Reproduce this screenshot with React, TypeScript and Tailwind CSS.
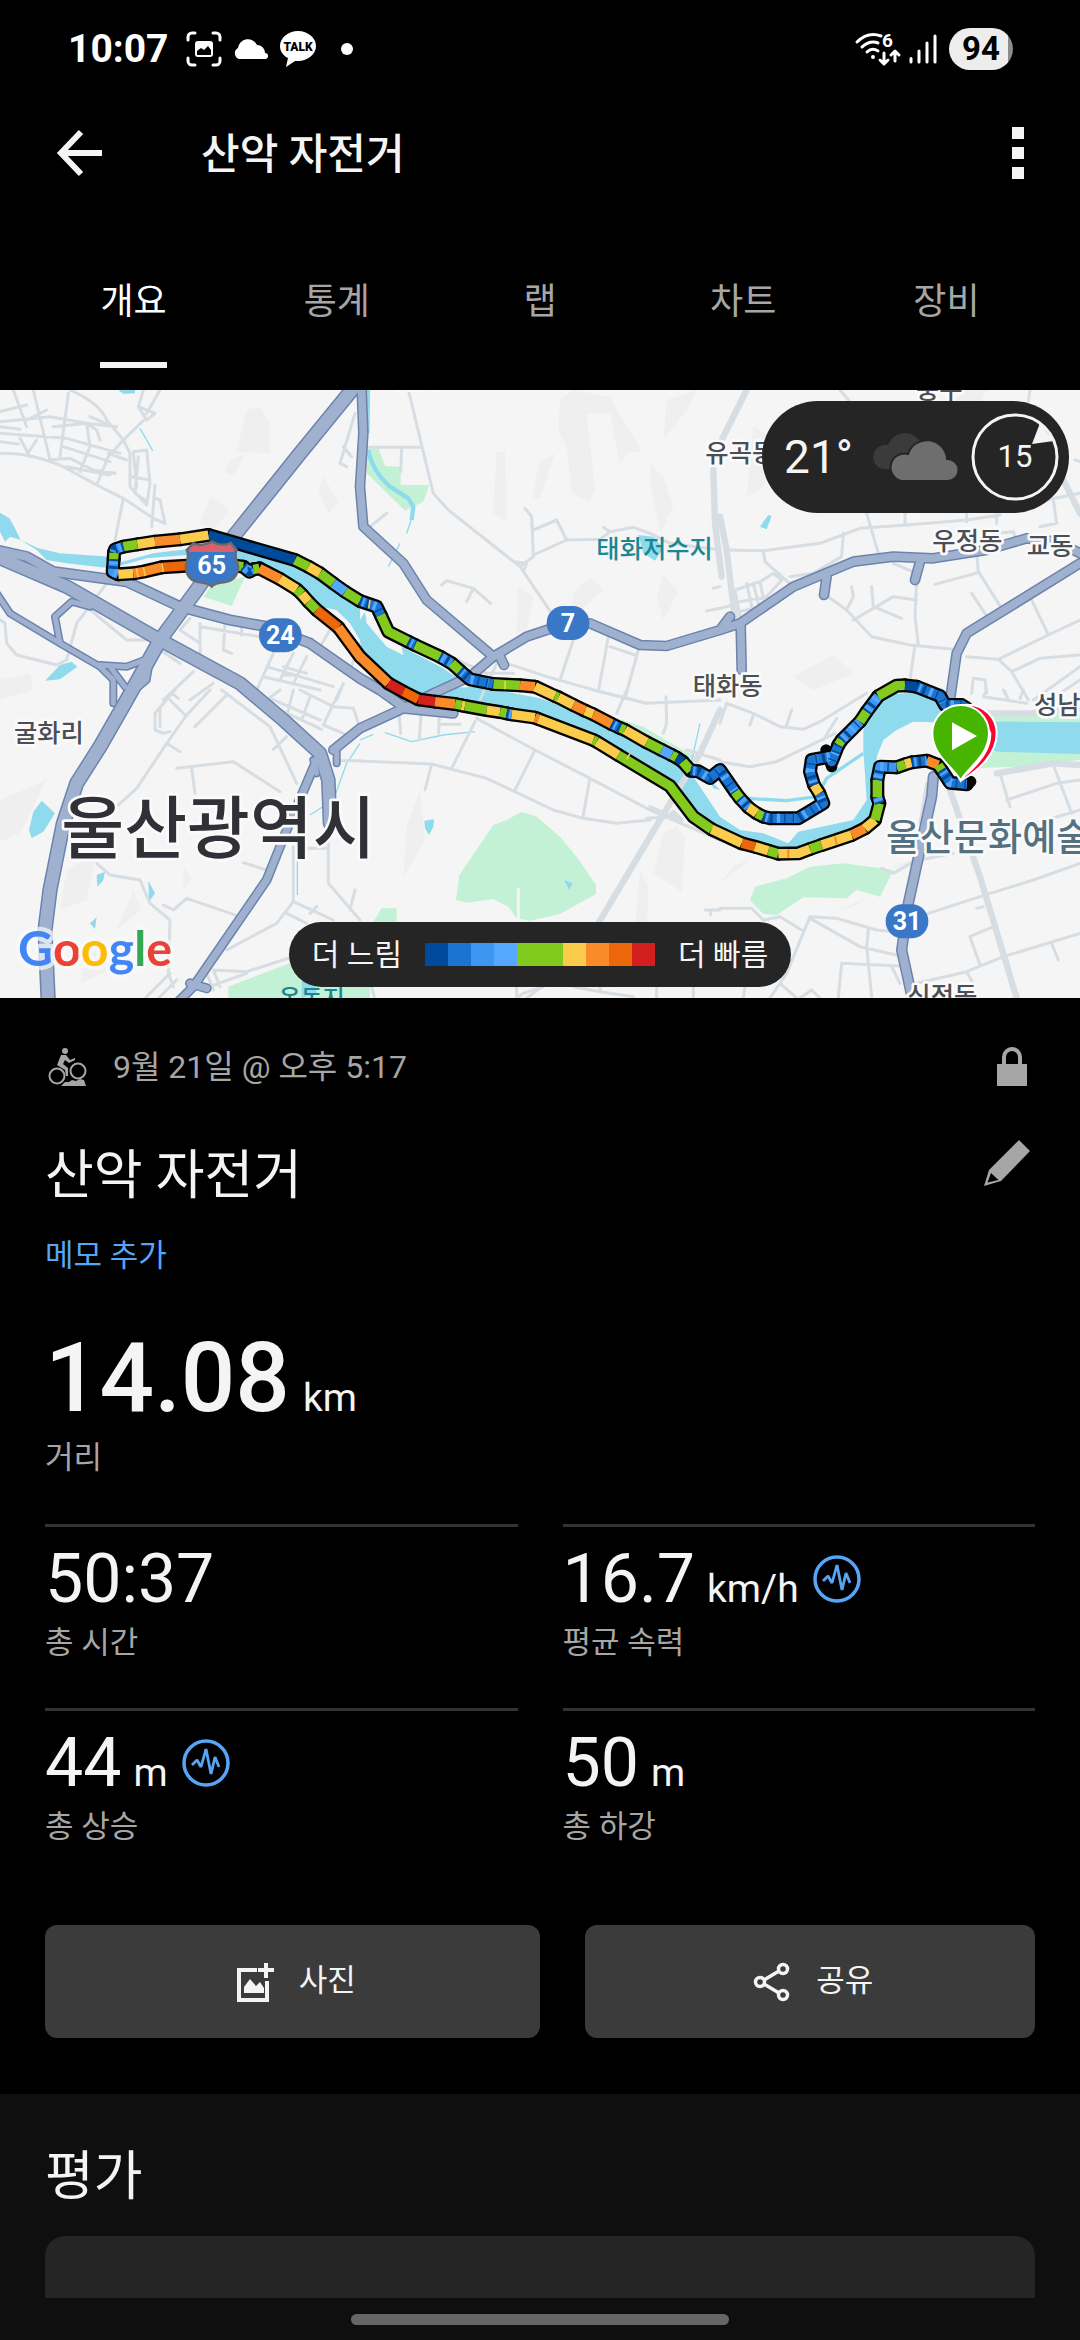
import type { ReactNode } from 'react'

const NAVY = '#004a9c'
const BLUE = '#1b75d0'
const SKY = '#3d96f2'
const LIGHT = '#56a8ff'
const GREEN = '#82ca1e'
const YELLOW = '#fbcb4b'
const ORANGE = '#fa8b28'
const DARK_ORANGE = '#eb6709'
const RED = '#d3201f'

const speedScale = [NAVY, BLUE, SKY, LIGHT, GREEN, GREEN, YELLOW, ORANGE, DARK_ORANGE, RED]

const tabs = ['개요', '통계', '랩', '차트', '장비']

const stats = [
  { value: '50:37', unit: '', label: '총 시간', sensor: false },
  { value: '16.7', unit: 'km/h', label: '평균 속력', sensor: true },
  { value: '44', unit: 'm', label: '총 상승', sensor: true },
  { value: '50', unit: 'm', label: '총 하강', sensor: false },
]

// Map canvas is 3240 x 1824, split in six 1080 x 900 tiles.
const minorRoads = [
  {
    x: 0,
    y: 0,
    d: 'M0 190C60 190 100 195 180 225L290 285L370 325L460 385L495 400L480 330L465 325M210 0Q300 40 320 90L370 150L390 190V290L440 345L450 280L440 180L400 185L410 290M415 200L405 310L435 330M480 0L440 70M430 0L415 50L440 90L465 70L415 50M430 92L370 150L325 200L290 285M100 0L150 210M205 10L180 200M40 0L80 110M0 65L80 45M80 90L140 60M0 95L150 80L260 100L350 110M0 130L200 145L360 190M0 110L60 118M0 155L55 162M60 145L90 200M110 150L80 195M160 110L260 100L290 120L300 150M270 80L340 110M260 100L270 170L240 245M150 210L210 205L280 240L345 250M190 170L330 215M200 230L330 255M325 190L380 210M370 325L345 450M395 260L450 270M465 285L455 410M320 580L290 620L230 700L200 810L170 825L50 795L20 760L15 700L0 690M265 655L380 750H440M570 685L540 720L600 760M600 700V790M600 710L780 740M675 700L670 780L695 790M725 715V735M480 780L540 820M580 845L490 930M640 880L570 930M820 790L770 900M800 830L1000 890M850 855H890M880 790L840 870M920 800L880 880M790 860L960 900M850 830L920 850M960 770L990 720L1010 730M1065 70L1020 220L1040 230M1030 170L1055 200M1080 760L1050 840M1030 880L1010 930',
  },
  {
    x: 1080,
    y: 0,
    d: 'M145 0L220 310L265 360L480 530L575 670M0 172H185M125 175L122 245M30 410L80 370M495 355L515 380L520 500L480 530M520 420L590 390L620 450M520 495L620 450L720 448L750 425L820 412L870 430L930 460L1080 480M730 412L750 425M245 585L260 572L340 595L392 640M340 595L320 635M640 750L600 870M745 740L715 905M750 770L825 795M835 780L795 925M270 800L380 850H460M440 820L560 860L720 905L860 940M410 820L360 930M1080 590L1060 595M1080 655L1040 663M460 515L500 520L490 545',
  },
  {
    x: 2160,
    y: 0,
    d: 'M360 0L390 35M930 0L925 35M20 480L130 482L300 460L420 415L560 405L740 390L840 375M440 370L475 490M555 370V405M830 370V400M740 370V395M370 430L365 500L280 550L210 560M130 482L135 515L220 590M45 600L60 680M80 580L100 670M100 580L120 660M120 575L135 650M45 600L120 575L160 550L185 570M60 635L140 620L185 570M60 665L140 645L210 590M0 655L40 645M395 590L400 620L380 660M310 610L380 660L455 740L570 765L700 778M455 590L460 650L545 685M400 690L520 620L590 630M590 570L585 680L595 765M585 765L570 870M520 520L590 550M540 495H590M770 490L775 545L845 655M645 583L775 548M755 610L805 685M935 630L985 735M740 800L835 808L985 735L1080 690M835 808L875 845L925 930M875 845L960 805L1080 795M940 930L1080 830M990 930L1080 870M755 910L760 865L795 870L800 910M855 905L865 930M830 430L880 425L885 440M980 330L1080 310M1000 330L1010 400L960 410M1065 210L1080 215',
  },
  {
    x: 0,
    y: 900,
    d: 'M525 0L465 70V120L490 130L510 125M480 50V110M630 0L560 75L500 160L410 295L355 345M500 160L540 185M510 30L555 75M515 10L535 25M530 235L700 215L840 305M575 235L585 310M680 15L585 110M665 0L810 110L890 280M860 140L820 178M810 25L960 90M830 55L965 118M880 0L860 80M840 0L800 30M900 0L1000 50L1060 55L1075 100M930 20L905 90M1020 0L970 105L1030 130M730 518L800 540M290 520L330 555L420 570L450 640L510 690L505 850L520 890M490 645L520 660L560 625L720 680M880 470V635L1000 690M880 635L830 700L680 780M860 670L920 700M930 670L950 650M985 430V580L1080 690M910 475H985M1065 600L1050 660M510 850L430 930M530 870L470 930M640 840L740 845L880 800M600 900L740 850M640 840L660 890M620 850L640 900M1010 212H1080',
  },
  {
    x: 1080,
    y: 900,
    d: 'M0 213L215 222L380 265L580 360L670 385L770 400L870 390M350 85L525 180L690 265L870 360L1080 450M215 222L195 300M345 95L275 235M525 180L465 300M690 265L668 385M118 80L122 130M183 75L178 150M238 75L236 130M240 103H300M700 0L860 40L1080 30M918 20L920 100L910 130M800 0L770 70M980 180L1080 210M1035 660H1080M1052 660V675M870 350L940 380L860 385M720 905L820 920M890 890V924M1000 890V924M470 890V924L490 910L550 890M500 924L540 895M35 890L45 930M640 890L720 905V890',
  },
  {
    x: 2160,
    y: 900,
    d: 'M20 40L100 70L180 110L250 118L300 95L440 10M0 215L90 230L170 215L345 130M350 85L310 150M215 60L200 105M100 75L90 105M20 40L0 100M800 0L790 20L920 40M850 0L860 20M910 0L900 25M840 250L870 350M860 330L1010 280L1080 270M1000 225L1055 370M625 670L780 620L940 570L1080 520M600 510L700 490M980 390L1080 360M485 535L520 550L590 510M590 880L740 845L850 800L1080 730M740 845L765 890M820 710L750 740L780 825M770 655L790 650M995 760L1015 810M0 655L95 655L130 690L180 680L245 720M270 680L200 850L180 880L230 924M180 880L150 924M75 890L70 924M270 680L350 685L470 720L530 725M270 685L420 770L530 795M445 720L440 770L455 920M365 820L540 828M365 820L355 924M515 830L540 880M240 924L275 900L300 924M620 280L600 400',
  },
]

const wideMinorRoads =
  'M2140 240L2145 400L2165 560M2240 0L2160 160M2160 380L2180 480L2205 690M3190 270L3240 370M2160 960L2100 1090L1980 1290L1795 1600M2930 970L3090 970L3240 955M2990 1150L3160 1120L3240 1125M2850 1200L2940 1460L3050 1824M2020 1270L2040 1290'

const highways = [
  { w: 46, d: 'M1080 -30L900 190L700 440L590 600L480 750L380 930L300 1070L230 1180L190 1300L150 1500L135 1620L145 1840' },
  { w: 44, d: 'M-10 500L200 590L480 750L720 880L850 990L960 1090L985 1170L990 1300' },
  { w: 34, d: 'M-10 480L80 500L160 545L380 575L540 650L690 690L800 710L930 760L1080 865L1140 900L1210 950' },
  { w: 24, d: 'M-10 610L30 670L180 760L300 830L340 870V940M180 760L165 680L215 635L270 650M300 825L380 830L460 800M330 830L375 890M450 810L440 870L370 930M1010 1080V1120M940 1110L950 1150' },
  { w: 32, d: 'M1085 0L1090 130L1080 290L1090 410L1210 520L1280 630L1480 800L1410 860L1300 910L1210 955L1080 1015L1000 1080M1210 955L1360 970M1500 800L1512 825' },
  { w: 32, d: 'M1480 800L1580 740L1700 700H1770L1920 765L2000 768L2160 720L2220 700L2380 590L2560 515L2680 500L2800 505L2960 480L3080 445L3170 455L3260 500M2222 700L2225 840M2480 560L2472 615M2760 515L2745 570M2160 720L2190 680M3240 520L2900 730L2870 790L2850 930' },
  { w: 30, d: 'M950 1110L860 1320L800 1470L690 1630L580 1790L530 1840M570 1780L620 1795' },
  { w: 34, d: 'M2800 1160L2795 1220L2760 1380L2725 1540L2705 1680L2740 1840' },
]

const segments: [string, string][] = [
  // north bank
  [NAVY, '625,435 885,510'],
  [GREEN, '885,510 925,530'],
  [YELLOW, '925,530 960,550'],
  [GREEN, '960,550 1000,580'],
  [LIGHT, '1000,580 1035,605'],
  [GREEN, '1035,605 1080,633'],
  [BLUE, '1080,633 1130,650 1142,675'],
  [GREEN, '1142,675 1165,725 1225,755'],
  [BLUE, '1225,755 1245,765'],
  [GREEN, '1245,765 1320,800'],
  [SKY, '1320,800 1355,820'],
  [GREEN, '1355,820 1380,842'],
  [BLUE, '1380,842 1410,868 1480,882'],
  [GREEN, '1480,882 1560,886'],
  [ORANGE, '1560,886 1605,890'],
  [YELLOW, '1605,890 1665,918'],
  [GREEN, '1665,918 1675,922'],
  [YELLOW, '1675,922 1720,945'],
  [ORANGE, '1720,945 1755,962'],
  [YELLOW, '1755,962 1780,973'],
  [ORANGE, '1780,973 1835,1002'],
  [BLUE, '1835,1002 1860,1014'],
  [GREEN, '1860,1014 1875,1020'],
  [YELLOW, '1875,1020 1940,1057'],
  [GREEN, '1940,1057 1985,1080'],
  [LIGHT, '1985,1080 2015,1095'],
  [GREEN, '2015,1095 2030,1103'],
  [NAVY, '2030,1103 2048,1115'],
  [GREEN, '2048,1115 2072,1142'],
  [BLUE, '2072,1142 2095,1144 2130,1164 2160,1140 2205,1205'],
  [GREEN, '2205,1205 2220,1225'],
  [SKY, '2220,1225 2245,1252'],
  [YELLOW, '2245,1252 2270,1270'],
  [GREEN, '2270,1270 2290,1280'],
  [BLUE, '2290,1280 2310,1285 2395,1285 2470,1240 2458,1210'],
  [YELLOW, '2458,1210 2442,1185'],
  [BLUE, '2442,1185 2430,1145 2435,1110 2490,1100 2495,1115 2515,1065'],
  [GREEN, '2515,1065 2525,1050'],
  [SKY, '2525,1050 2580,995'],
  [GREEN, '2580,995 2600,965'],
  [SKY, '2600,965 2635,918'],
  [GREEN, '2635,918 2690,887 2715,886'],
  [NAVY, '2715,886 2750,890'],
  [BLUE, '2750,890 2820,918 2835,945 2885,945 2900,955'],
  // south bank
  [YELLOW, '625,435 540,448'],
  [ORANGE, '540,448 465,455'],
  [YELLOW, '465,455 412,463'],
  [GREEN, '412,463 370,470'],
  [SKY, '370,470 345,478 342,488'],
  [GREEN, '342,488 341,508'],
  [SKY, '341,508 338,545 355,553'],
  [YELLOW, '355,553 400,550'],
  [ORANGE, '400,550 430,545 485,532'],
  [DARK_ORANGE, '485,532 560,527 705,527'],
  [GREEN, '705,527 730,530'],
  [SKY, '730,530 748,545 760,538'],
  [GREEN, '760,538 778,535'],
  [ORANGE, '778,535 840,567'],
  [YELLOW, '840,567 890,598'],
  [GREEN, '890,598 905,612'],
  [YELLOW, '905,612 925,635'],
  [GREEN, '925,635 950,660'],
  [DARK_ORANGE, '950,660 1015,712'],
  [ORANGE, '1015,712 1080,800 1165,880'],
  [RED, '1165,880 1210,905'],
  [DARK_ORANGE, '1210,905 1255,928'],
  [RED, '1255,928 1305,935'],
  [ORANGE, '1305,935 1365,942'],
  [GREEN, '1365,942 1385,946'],
  [YELLOW, '1385,946 1395,948'],
  [GREEN, '1395,948 1460,960'],
  [YELLOW, '1460,960 1500,966'],
  [GREEN, '1500,966 1520,970'],
  [BLUE, '1520,970 1535,973'],
  [YELLOW, '1535,973 1605,983'],
  [ORANGE, '1605,983 1615,987'],
  [YELLOW, '1615,987 1780,1050'],
  [GREEN, '1780,1050 1790,1055'],
  [YELLOW, '1790,1055 1855,1095'],
  [GREEN, '1855,1095 2010,1188 2080,1280 2135,1318'],
  [YELLOW, '2135,1318 2225,1360'],
  [DARK_ORANGE, '2225,1360 2265,1370'],
  [YELLOW, '2265,1370 2305,1382'],
  [GREEN, '2305,1382 2335,1391'],
  [YELLOW, '2335,1391 2395,1390 2430,1377'],
  [GREEN, '2430,1377 2465,1365'],
  [YELLOW, '2465,1365 2555,1335'],
  [ORANGE, '2555,1335 2595,1315'],
  [YELLOW, '2595,1315 2625,1290'],
  [GREEN, '2625,1290 2638,1240'],
  [SKY, '2638,1240 2632,1222'],
  [GREEN, '2632,1222 2632,1170'],
  [SKY, '2632,1170 2640,1130 2690,1132'],
  [GREEN, '2690,1132 2715,1123'],
  [YELLOW, '2715,1123 2735,1117'],
  [BLUE, '2735,1117 2780,1112'],
  [ORANGE, '2780,1112 2815,1125'],
  [GREEN, '2815,1125 2825,1140'],
  [BLUE, '2825,1140 2850,1178 2900,1183'],
]

const blues = [BLUE, SKY]

function Label({ x, y, size = 76, fill = '#4b4e54', children }: {
  x: number
  y: number
  size?: number
  fill?: string
  children: ReactNode
}) {
  return (
    <text
      x={x}
      y={y}
      fontSize={size}
      fontWeight="500"
      fill={fill}
      stroke="#fafafa"
      strokeWidth="16"
      strokeLinejoin="round"
      paintOrder="stroke"
    >
      {children}
    </text>
  )
}

function RouteShield({ x, y, children }: { x: number; y: number; children: ReactNode }) {
  return (
    <g>
      <rect x={x - 64} y={y - 51} width="128" height="102" rx="50" fill="#3a77c7" />
      <text x={x} y={y + 27} fontSize="75" fontWeight="700" fill="#fff" textAnchor="middle">
        {children}
      </text>
    </g>
  )
}

function RideMap() {
  return (
    <svg
      className="block h-full w-full"
      viewBox="0 0 3240 1824"
      preserveAspectRatio="xMidYMid slice"
      fontFamily='Roboto, "Noto Sans CJK KR", sans-serif'
      role="img"
      aria-label="지도"
    >
      <rect width="3240" height="1824" fill="#f5f5f5" />

      {/* terrain */}
      <g fill="#efefef">
        <path d="M740 60L780 50L810 100V190L710 185ZM690 210L740 190L700 255L675 250ZM630 320L690 360L640 420L600 400ZM970 260L1015 335L985 370L955 300ZM1680 30L1720 0L1830 20L1925 185H1885L1860 225L1830 70H1760L1785 300L1770 335L1715 310L1700 170L1675 125ZM1490 185H1515L1520 395L1480 370ZM1615 220L1665 190L1620 325H1600ZM1950 220L1990 260L2020 350L1980 430L1950 280ZM1770 560L1810 600L1700 700L1720 610ZM1990 555L2035 605L1990 690L1970 620ZM1555 590L1600 620L1580 720L1550 730ZM2000 30L2090 0L2060 60L1990 150ZM2260 110L2330 150L2290 290L2240 320ZM2500 795L2560 850L2440 900L2380 860ZM2860 30L2900 0H2960L2930 60Z" />
        <path d="M0 1230L140 1170L60 1330L0 1355ZM200 1440L290 1390L260 1530L180 1560ZM550 1430L575 1465L550 1500ZM1260 1200L1275 1350L1210 1460L1220 1310ZM1990 1330L2030 1310L2055 1345L2045 1505L1960 1450ZM1920 1440L1945 1490L1940 1640L1900 1660ZM400 1500L440 1600L420 1560L350 1620ZM260 1700L300 1660L330 1740L240 1780ZM2200 1430L2160 1480L2260 1400ZM2680 1430L2760 1400L2700 1440ZM2520 1560L2600 1520L2560 1550ZM0 870L90 850L100 900L0 930Z" />
      </g>

      {/* parks */}
      <g fill="#c3f1d5">
        <path d="M610 620L640 580L735 560L695 648ZM1100 175H1135L1155 228L1202 230V285H1288L1270 335L1215 362L1100 250Z" />
        <path d="M1565 1265L1610 1280L1680 1340L1730 1400L1788 1485V1512L1680 1572L1590 1592L1550 1585L1525 1550L1480 1527L1400 1538L1368 1530L1378 1455L1480 1305L1520 1290Z" />
        <path d="M1145 1555H1190V1595H1120ZM685 1840V1790L880 1715L1000 1700H1110V1824ZM1820 975L1930 1010L2040 1075L2090 1100L2060 1110L1900 1050Z" />
        <path d="M2265 1490L2360 1465L2430 1430L2530 1420L2680 1440L2640 1520L2570 1500L2540 1525L2410 1522L2330 1575L2290 1572L2250 1530ZM2980 980L3080 965L3240 970V1000H2980ZM2920 1135L2960 1085H3240V1110L3060 1130Z" />
      </g>

      {/* water */}
      <g fill="#90daee">
        <path d="M0 368L28 385L40 405L62 450L30 440L15 455L0 425ZM62 450L115 475L180 490L330 500V535L200 520L140 510L110 480Z" />
        <path d="M350 520L460 490L560 478V495L440 505L350 530ZM700 480L880 510L1080 640V750L1050 700L1010 660L960 650L900 600L780 530L700 510Z" />
        <path d="M1080 690L1095 665L1100 700L1160 770L1210 795L1205 770L1330 835L1380 870L1300 910L1240 920L1150 880L1080 790Z" />
        <path d="M1330 895L1440 890L1620 925L1800 990L1990 1090L2080 1160L2160 1280V1340L2080 1270L2010 1180L1790 1050L1600 975L1330 925Z" />
        <path d="M2160 1280L2220 1320L2290 1330L2365 1360L2395 1325L2490 1305L2560 1290L2600 1230L2590 1080V1020L2630 950L2660 915L2760 905L2850 940L2990 995L3240 997V1092L2990 1085L2860 1050L2800 997L2740 995L2690 1020L2650 1050L2630 1100V1130L2615 1240L2600 1320L2540 1345L2370 1380L2260 1365L2160 1330Z" />
        <path d="M125 1232L165 1270L130 1325L95 1345L87 1320L100 1265ZM290 1455L315 1445L310 1470L292 1490ZM445 1472L465 1510L447 1535ZM290 1582L270 1600L285 1617ZM1273 1292L1302 1288L1300 1310L1287 1335L1275 1315ZM1692 1470L1718 1480L1708 1500Z" />
        <path d="M355 0H405V10L370 12ZM135 872L180 825L215 815L232 830L180 868ZM1915 435L1960 440L1990 475L1965 512L1930 490ZM2280 410L2305 375L2315 378L2300 418ZM905 1770H940L950 1810L905 1824ZM2125 1165L2160 1200L2140 1195Z" />
      </g>
      <g fill="none" stroke="#90daee" strokeLinejoin="round">
        <path d="M1104 0L1102 130M1105 180Q1115 240 1170 290L1225 325L1240 350L1235 390" strokeWidth="13" />
        <path d="M1235 385L1220 430M1200 460L1165 530M1080 1050L1120 1033M1155 1028L1235 1055L1330 1035L1425 1025M1080 1060L1040 1120L1000 1230L930 1275M892 1400V1515M420 115L458 182M2100 1000L2060 1180" strokeWidth="4" />
        <path d="M2590 1090L2480 1165L2450 1220L2360 1232L2240 1225" strokeWidth="10" />
      </g>

      {/* roads */}
      <g fill="none" stroke="#d6dde3" strokeWidth="9" strokeLinecap="round" strokeLinejoin="round">
        {minorRoads.map((tile) => (
          <path key={`${tile.x}-${tile.y}`} d={tile.d} transform={`translate(${tile.x} ${tile.y})`} />
        ))}
        <path d={wideMinorRoads} strokeWidth="19" />
        <path d="M1555 1495V1590" stroke="#f5f5f5" strokeLinecap="butt" />
      </g>
      <g fill="none" strokeLinejoin="round" strokeLinecap="round">
        {highways.map((road) => (
          <path key={road.d} d={road.d} stroke="#6b84ad" strokeWidth={road.w} />
        ))}
        {highways.map((road) => (
          <path key={road.d} d={road.d} stroke="#9fb1cf" strokeWidth={road.w - 9} />
        ))}
      </g>

      {/* place names */}
      <Label x={1140} y={-8}>다운동</Label>
      <Label x={2116} y={215}>유곡동</Label>
      <Label x={2748} y={28}>중구</Label>
      <Label x={2797} y={480}>우정동</Label>
      <Label x={3080} y={494}>교동</Label>
      <Label x={2078} y={914}>태화동</Label>
      <Label x={42} y={1056}>굴화리</Label>
      <Label x={3102} y={972}>성남동</Label>
      <Label x={2722} y={1846}>신정동</Label>
      <text x={1789} y={503} fontSize="76" fontWeight="500" fill="#1a8795">태화저수지</text>
      <text x={836} y={1850} fontSize="72" fontWeight="500" fill="#1a8795">옥동지</text>

      {/* ride track */}
      <g fill="none" strokeLinejoin="round">
        {segments.map(([, points]) => (
          <polyline key={points} points={points} stroke="#050505" strokeWidth="42" strokeLinecap="round" />
        ))}
        <path d="M2478 1080L2495 1130M2900 1183L2912 1175" stroke="#050505" strokeWidth="34" strokeLinecap="round" />
        {segments.map(([color, points]) => (
          <polyline key={points} points={points} stroke={color} strokeWidth="28" />
        ))}
        {segments
          .filter(([color]) => blues.includes(color))
          .map(([, points]) => (
            <g key={points}>
              <polyline points={points} stroke={LIGHT} strokeWidth="27" strokeDasharray="6 27 10 39" strokeDashoffset="-8" />
              <polyline points={points} stroke={NAVY} strokeWidth="27" strokeDasharray="5 15 9 34 4 22" />
            </g>
          ))}
        <path d="M455 443V470M446 444V471M485 520L490 546M430 532L436 558M410 536L414 562" stroke={YELLOW} strokeWidth="5" />
        <path d="M1110 630L1106 655M1515 874V898M1880 1108L1890 1090" stroke={YELLOW} strokeWidth="5" />
        <path d="M2365 1378V1403M2505 1340L2510 1364" stroke={ORANGE} strokeWidth="6" />
      </g>

      <Label x={184} y={1388} size={205} fill="#2f3136">울산광역시</Label>
      <Label x={2658} y={1382} size={111} fill="#54717f">울산문화예술회관</Label>

      {/* route shields */}
      <path
        d="M580 460Q600 472 635 455Q670 472 692 458L710 480Q702 495 715 530Q712 575 665 578Q645 580 635 590Q625 580 605 578Q560 575 557 530Q568 495 560 480Z"
        fill="#3a77c7"
        stroke="#696a6e"
        strokeWidth="7"
      />
      <path d="M581 464Q602 475 635 459Q668 475 691 463L704 480L701 486H570L566 480Z" fill="#d9626a" />
      <text x="635" y="551" fontSize="75" fontWeight="700" fill="#fff" textAnchor="middle">65</text>
      <RouteShield x={841} y={736}>24</RouteShield>
      <RouteShield x={1704} y={699}>7</RouteShield>
      <RouteShield x={2721} y={1594}>31</RouteShield>

      {/* start and finish pins */}
      <path d="M2882 1172C2864 1135 2818 1090 2818 1030A85 85 0 0 1 2990 1030C2990 1090 2940 1140 2882 1172Z" fill="#f8062f" stroke="#fff" strokeWidth="6" />
      <path d="M2882 1172C2864 1135 2818 1090 2818 1030A83 83 0 0 1 2974 1030C2974 1090 2930 1130 2882 1172Z" fill="#fff" />
      <path d="M2882 1172C2864 1135 2797 1098 2797 1030A85 85 0 0 1 2967 1030C2967 1098 2900 1135 2882 1172Z" fill="#47b400" stroke="#fff" strokeWidth="6" />
      <path d="M2856 997L2931 1038L2856 1081Z" fill="#fff" />

      <text
        x="54"
        y="1727"
        fontSize="145"
        fontFamily="Lato, sans-serif"
        fontWeight="700"
        stroke="#fafafa"
        strokeOpacity="0.7"
        strokeWidth="26"
        strokeLinejoin="round"
        paintOrder="stroke"
      >
        <tspan fill="#4285f4">G</tspan>
        <tspan fill="#ea4335">o</tspan>
        <tspan fill="#fbbc05">o</tspan>
        <tspan fill="#4285f4">g</tspan>
        <tspan fill="#34a853">l</tspan>
        <tspan fill="#ea4335">e</tspan>
      </text>
    </svg>
  )
}

function StatusBar() {
  return (
    <div className="flex h-[98px] items-center justify-between pl-[68px] pr-[67px] text-white">
      <div className="flex items-center">
        <span className="text-[39px] font-bold leading-10">10:07</span>
        <svg className="ml-[17px] h-9 w-9" viewBox="0 0 36 36" fill="none" stroke="#fff" strokeWidth="3" strokeLinecap="round">
          <path d="M2 9V6a4 4 0 0 1 4-4h3M27 2h3a4 4 0 0 1 4 4v3M34 27v3a4 4 0 0 1-4 4h-3M9 34H6a4 4 0 0 1-4-4v-3" />
          <rect x="9" y="10" width="18" height="16" rx="3" fill="#fff" stroke="none" />
          <path d="M11 24v-4l4-3 3 2 4-4 3 4v5z" fill="#000" stroke="none" />
        </svg>
        <svg className="ml-[11px] h-6 w-9" viewBox="0 0 36 24" fill="#fff">
          <path d="M6 22a6 6 0 0 1-1-11 10 10 0 0 1 19-3 8 8 0 0 1 8 8 3 3 0 0 1 0 6z" />
        </svg>
        <svg className="ml-[10px] h-9 w-[38px] overflow-visible" viewBox="0 0 38 36" fontFamily="Roboto, sans-serif">
          <path d="M19 0C9 0 1 7 1 15c0 6 4 10 8 12L7 36l9-6h3c10 0 18-7 18-15S29 0 19 0z" fill="#fff" />
          <text x="19" y="20" fontSize="12" fontWeight="900" textAnchor="middle" fill="#000">TALK</text>
        </svg>
        <span className="ml-6 h-3 w-3 rounded-full bg-white" />
      </div>
      <div className="flex items-center">
        <svg className="h-9 w-[46px] overflow-visible" viewBox="0 0 46 36" fill="none" stroke="#fff" strokeWidth="3" strokeLinecap="round" strokeLinejoin="round" fontFamily="Roboto, sans-serif">
          <path d="M2 11Q13 0 26 5M7 16q8-7 16-4M12 21q5-5 11-1M29 22v11m-4-4 4 4 4-4M40 30V20m-4 4 4-4 4 4" />
          <circle cx="18" cy="26" r="2" fill="#fff" stroke="none" />
          <text x="27" y="16" fontSize="19" fontWeight="700" fill="#fff" stroke="none">6</text>
        </svg>
        <svg className="ml-2 h-[30px] w-7" viewBox="0 0 28 30" stroke="#fff" strokeWidth="3" strokeLinecap="round">
          <path d="M2 24.500V28M10 17V28M18 9V28M26 2V28" />
        </svg>
        <span className="ml-3 flex h-[42px] w-16 items-center justify-center rounded-full bg-linear-to-r from-[#ededed] from-92% to-[#8c8c8c] to-92% text-[33px] font-bold leading-[42px] text-black">
          94
        </span>
      </div>
    </div>
  )
}

function SensorIcon() {
  return (
    <svg className="h-12 w-12" viewBox="0 0 48 48" fill="none" stroke="#57a5f5">
      <circle cx="24" cy="24" r="22" strokeWidth="3.500" />
      <path d="M10 26l5-5 4 7 5-18 5 25 4-17 4 10" strokeWidth="2.800" strokeLinejoin="bevel" />
    </svg>
  )
}

export default function App() {
  return (
    <div className="flex min-h-screen flex-col bg-black font-[Roboto,'Noto_Sans_CJK_KR',sans-serif] text-[#f4f4f4]">
      <StatusBar />

      <header className="flex h-[110px] items-center pl-14 pr-[46px]">
        <button type="button" aria-label="뒤로" className="h-12 w-12">
          <svg viewBox="0 0 48 48" fill="none" stroke="currentColor" strokeWidth="6">
            <path d="M25 3L5 24l20 21M4 24h42" />
          </svg>
        </button>
        <h1 className="ml-[97px] flex-1 pt-1 text-[42px] font-medium leading-[56px]">산악 자전거</h1>
        <button type="button" aria-label="메뉴" className="flex h-14 w-8 flex-col items-center justify-center gap-2">
          <span className="h-3 w-3 bg-current" />
          <span className="h-3 w-3 bg-current" />
          <span className="h-3 w-3 bg-current" />
        </button>
      </header>

      <nav className="flex h-[182px] px-8 pt-16" role="tablist">
        {tabs.map((tab, i) => (
          <button
            key={tab}
            type="button"
            role="tab"
            aria-selected={i === 0}
            className={`flex h-24 flex-1 justify-center text-[36px] leading-[60px] ${i === 0 ? 'text-white' : 'text-[#a6a6a6]'}`}
          >
            <span className={`h-24 ${i === 0 ? 'border-b-6 border-[#f3f3f3]' : ''}`}>{tab}</span>
          </button>
        ))}
      </nav>

      <section className="relative aspect-[1080/608] w-full overflow-hidden">
        <RideMap />
        <div className="absolute right-[11px] top-[11px] flex h-28 items-center rounded-full bg-[#252525] pl-[22px] pr-[10px]">
          <span className="text-[46px] leading-[56px]">21°</span>
          <svg className="ml-[18px] h-12 w-[88px]" viewBox="0 0 88 48">
            <path d="M12 36A12 12 0 0 1 17 12A18 18 0 0 1 50 10V36Z" fill="#3b3b3b" />
            <path d="M30 48a13 13 0 0 1 7-27a20 20 0 0 1 39 5a11 11 0 0 1 1 22z" fill="#6e6e6e" stroke="#252525" strokeWidth="2" />
          </svg>
          <span className="relative ml-3 flex h-[88px] w-[88px] items-center justify-center text-[31px]">
            <svg className="absolute inset-0" viewBox="0 0 88 88" fill="none">
              <circle cx="44" cy="44" r="42" stroke="#f4f4f4" strokeWidth="3" />
              <path d="M69 10L83 28L61 31Z" fill="#f4f4f4" />
            </svg>
            15
          </span>
        </div>
        <div className="absolute inset-x-0 bottom-[11px] flex justify-center">
          <div className="flex h-[65px] items-center gap-[23px] rounded-full bg-[#252525] px-[23px] text-[30px] leading-9">
            <span>더 느림</span>
            <div className="flex">
              {speedScale.map((color, i) => (
                <span key={i} className="h-[23px] w-[23px]" style={{ backgroundColor: color }} />
              ))}
            </div>
            <span>더 빠름</span>
          </div>
        </div>
      </section>

      <main className="px-[45px]">
        <div className="flex items-center pt-[45px] text-[#a6a6a6]">
          <svg className="ml-[3px] h-10 w-10" viewBox="0 0 40 40" fill="none" stroke="currentColor">
            <circle cx="17" cy="4" r="3" fill="currentColor" stroke="none" />
            <circle cx="9" cy="29" r="7.500" strokeWidth="2" />
            <circle cx="30" cy="24" r="7.500" strokeWidth="2" />
            <path d="M13 8l5 0 4 5 5-2v2l-6 3-4-3-2 4 5 4 0 8h-2l-1-6-8-5z" fill="currentColor" stroke="none" />
            <path d="M13 39l4-4 4 0 3-2 4 1 4-2 4 1 2 6z" fill="currentColor" stroke="none" />
          </svg>
          <p className="ml-[25px] flex-1 text-[32px] leading-[48px]">9월 21일 @ 오후 5:17</p>
          <svg className="mr-[7px] h-10 w-8" viewBox="0 0 32 40" fill="none">
            <path d="M8 20V10a8 8 0 0 1 16 0v10" stroke="currentColor" strokeWidth="4" />
            <path d="M1 17h30v22H1z" fill="currentColor" />
          </svg>
        </div>

        <div className="flex items-center pt-[46px]">
          <h2 className="flex-1 pt-[3px] text-[53px] leading-[72px]">산악 자전거</h2>
          <button type="button" aria-label="편집" className="mb-6 mr-1 h-12 w-12 text-[#a6a6a6]">
            <svg viewBox="0 0 48 48" fill="currentColor">
              <path fillRule="evenodd" d="M36 1L47 12L18 42L1 47L6 31ZM8 34L4.500 43.500L15.500 41Z" />
            </svg>
          </button>
        </div>
        <a href="#memo" className="mt-5 block w-fit text-[31px] leading-[48px] text-[#57a5f5]">메모 추가</a>

        <div className="pt-[42px]">
          <p className="flex items-baseline gap-[13px]">
            <span className="text-[96px] font-medium leading-[112px]">14.08</span>
            <span className="text-[39px] leading-none">km</span>
          </p>
          <p className="text-[31px] leading-12 text-[#a6a6a6]">거리</p>
        </div>

        <div className="grid grid-cols-2 gap-x-[45px] pt-[42px]">
          {stats.map((stat) => (
            <div key={stat.label} className="h-[184px] border-t-3 border-[#333] pt-3">
              <div className="flex h-20 items-center">
                <p className="flex items-baseline gap-3">
                  <span className="text-[68px] leading-20">{stat.value}</span>
                  {stat.unit && <span className="text-[39px] leading-none">{stat.unit}</span>}
                </p>
                {stat.sensor && (
                  <span className="ml-[14px]">
                    <SensorIcon />
                  </span>
                )}
              </div>
              <p className="text-[31px] leading-12 text-[#a6a6a6]">{stat.label}</p>
            </div>
          ))}
        </div>

        <div className="flex gap-[45px] pb-14 pt-[33px]">
          <button type="button" className="flex h-[113px] grow-11 basis-0 items-center justify-center gap-6 rounded-xl bg-[#3b3b3b] pl-[6px] text-[31px]">
            <svg className="h-10 w-10" viewBox="0 0 40 40" fill="none" stroke="currentColor" strokeWidth="4">
              <path d="M22 8H4v30h28V19M31 1v15M23 8h16" />
              <path d="M9 31v-6l6-8 6 7 4-4 4 6v5z" fill="currentColor" stroke="none" />
            </svg>
            사진
          </button>
          <button type="button" className="flex h-[113px] grow-10 basis-0 items-center justify-center gap-6 rounded-xl bg-[#3b3b3b] pl-[6px] text-[31px]">
            <svg className="h-10 w-10" viewBox="0 0 40 40" fill="none" stroke="currentColor" strokeWidth="3.500">
              <circle cx="8" cy="20" r="4.500" />
              <circle cx="31" cy="7" r="4.500" />
              <circle cx="31" cy="33" r="4.500" />
              <path d="M12 18L27 9M12 22l15 9" />
            </svg>
            공유
          </button>
        </div>
      </main>

      <section className="flex flex-1 flex-col bg-[#0f0f0f] px-[45px] pt-[47px]">
        <h2 className="text-[53px] leading-[72px]">평가</h2>
        <div className="mt-[23px] h-[62px] rounded-t-[20px] bg-[#252525]" />
        <div className="mx-auto mt-4 h-[11px] w-[378px] rounded-full bg-[#666]" />
      </section>
    </div>
  )
}
